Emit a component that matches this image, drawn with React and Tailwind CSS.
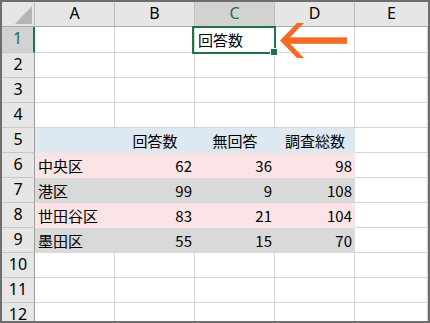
import React from "react";

const JP = "font-['Noto_Sans_CJK_JP','Noto_Sans',sans-serif]";

const rows = [
  { n: 1, cells: ["", "", "回答数", ""] },
  { n: 2 },
  { n: 3 },
  { n: 4 },
  { n: 5, fill: "bg-[#dde8f1]", head: true, cells: ["", "回答数", "無回答", "調査総数"] },
  { n: 6, fill: "bg-[#fae4e6]", cells: ["中央区", "62", "36", "98"] },
  { n: 7, fill: "bg-[#d9d9d9]", cells: ["港区", "99", "9", "108"] },
  { n: 8, fill: "bg-[#fae4e6]", cells: ["世田谷区", "83", "21", "104"] },
  { n: 9, fill: "bg-[#d9d9d9]", cells: ["墨田区", "55", "15", "70"] },
  { n: 10 },
  { n: 11 },
  { n: 12 },
];

function ColumnHeaders() {
  return (
    <div className="flex h-[25px] border-b border-[#ababab] bg-[#e6e6e6] font-['Noto_Sans',sans-serif] text-[16px] text-black">
      <div className="relative w-[33px] border-r border-[#bfbfbf]">
        <svg className="absolute left-0 top-0" width="32" height="24">
          <polygon points="13,22 30,22 30,4" fill="#b5b5b5" />
        </svg>
      </div>
      {["A", "B", "C", "D"].map((c) => (
        <div
          key={c}
          className={`flex w-[80px] items-center justify-center border-r border-[#bfbfbf] pb-[2px] leading-none ${
            c === "C" ? "bg-[#d2d2d2] text-[#217346]" : ""
          }`}
        >
          {c}
        </div>
      ))}
      <div className="flex flex-1 items-center justify-center pb-[2px] leading-none">E</div>
    </div>
  );
}

function Row({ row }) {
  const selected = row.n === 1;
  const cells = row.cells || ["", "", "", ""];
  return (
    <div className={`flex ${row.n === 1 ? "h-[26px]" : "h-[25px]"}`}>
      <div
        className={`flex w-[33px] items-center justify-center border-b border-[#c6c6c6] pb-[3px] font-['Noto_Sans',sans-serif] text-[16px] leading-none ${
          selected
            ? "border-r-2 border-r-[#217346] bg-[#d2d2d2] text-[#217346]"
            : "border-r border-r-[#9e9e9e] bg-[#e6e6e6] text-black"
        }`}
      >
        {row.n}
      </div>
      {cells.map((v, i) => {
        const isNum = /^\d+$/.test(v);
        const align = row.head ? "justify-center" : isNum ? "justify-end" : "justify-start";
        return (
          <div
            key={i}
            className={`flex w-[80px] items-center px-[3px] pb-[1px] text-[15px] leading-none text-black ${JP} ${align} ${
              row.fill ? row.fill : "border-b border-r border-[#d4d4d4]"
            }`}
          >
            {v}
          </div>
        );
      })}
      <div className="flex-1 border-b border-r border-[#d4d4d4]" />
    </div>
  );
}

export default function App() {
  return (
    <div className="relative h-[323px] w-[430px] overflow-hidden border-2 border-[#6e6e6e] bg-white">
      <ColumnHeaders />
      {rows.map((r) => (
        <Row key={r.n} row={r} />
      ))}

      {/* active cell C1 */}
      <div className="absolute left-[190px] top-[24px] h-[28px] w-[84px] border-2 border-[#217346]" />
      <div className="absolute left-[268px] top-[46px] h-[8px] w-[8px] border border-white bg-[#217346]" />

      {/* pointer arrow */}
      <svg className="absolute left-[270px] top-[14px]" width="80" height="46" viewBox="270 14 80 46">
        <polygon points="295,21 302,21 285,38.5 302,56 295,56 278,38.5" fill="#f26b25" />
        <rect x="283" y="35.3" width="62" height="6.5" fill="#f26b25" />
      </svg>
    </div>
  );
}
